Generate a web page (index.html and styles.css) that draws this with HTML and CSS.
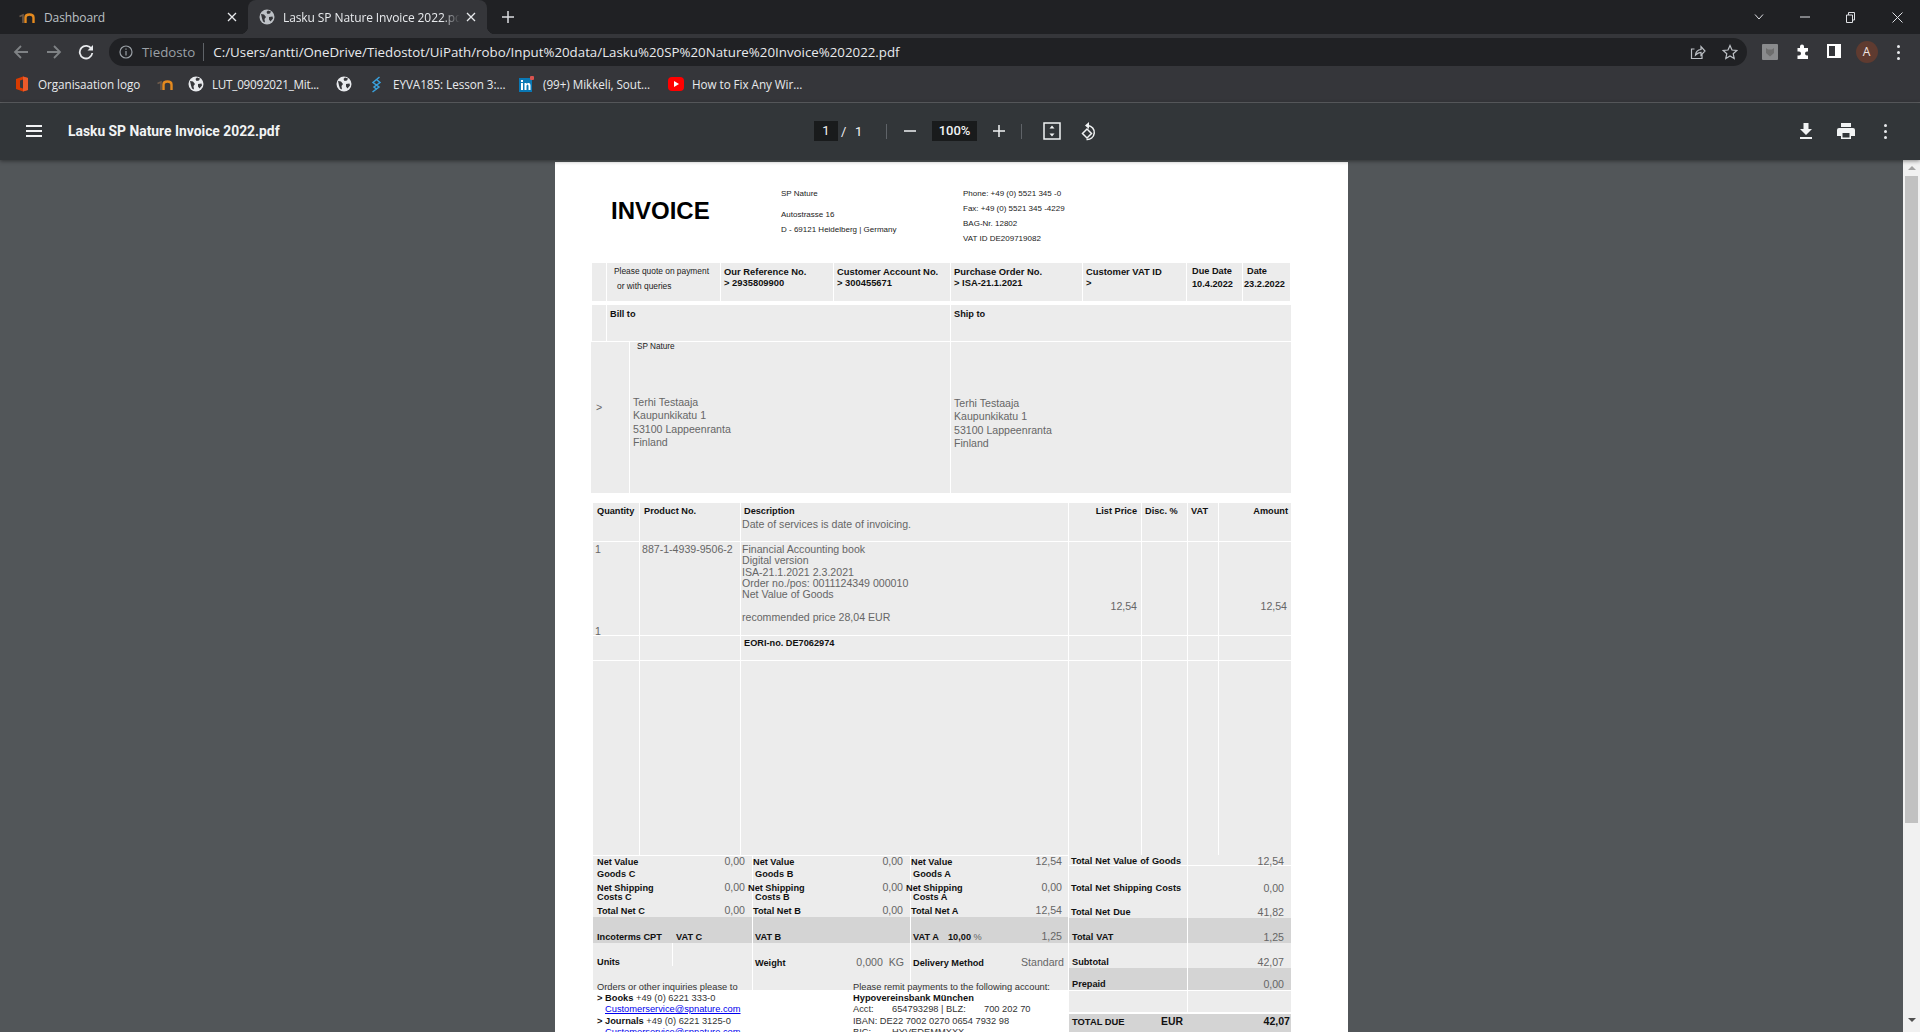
FILE: index.html
```html
<!DOCTYPE html>
<html lang="en">
<head>
    <meta charset="UTF-8">
    <title>Lasku SP Nature Invoice 2022.pdf</title>
    <link rel="stylesheet" href="styles.css">
</head>
<body>
    <svg class="defs" width="0" height="0">
        <symbol id="globe" viewBox="0 0 16 16">
            <circle cx="8" cy="8" r="7.5" fill="currentColor"/>
            <path d="M2 5l3 .5 2 2.500-1.500 2 .5 3.500-2-1-1-3zM9 1.500l3 1-1 2-2.500.5-1-2zM10 8l3.500-.5.500 2-2.500 3-1.500-2z" fill="#35363a"/>
        </symbol>
        <symbol id="moodle" viewBox="0 0 16 16">
            <path d="M0.500 7.500l3.500-1.500v8" fill="none" stroke="#6d5a4b" stroke-width="1.600"/>
            <path d="M6.500 14V8.500q0-3 4-3t4 3V14" fill="none" stroke="#e58a1f" stroke-width="2.400"/>
        </symbol>
    </svg>

    <div class="tabstrip">
        <div class="tab">
            <svg class="tab-icon" width="16" height="16"><use href="#moodle"/></svg>
            <span class="tab-title">Dashboard</span>
            <svg class="tab-close" width="10" height="10" viewBox="0 0 10 10"><path d="M1 1l8 8M9 1l-8 8"/></svg>
        </div>
        <div class="tab active">
            <svg class="tab-icon" width="16" height="16"><use href="#globe"/></svg>
            <span class="tab-title">Lasku SP Nature Invoice 2022.pdf</span>
            <svg class="tab-close" width="10" height="10" viewBox="0 0 10 10"><path d="M1 1l8 8M9 1l-8 8"/></svg>
        </div>
        <svg class="new-tab" width="12" height="12" viewBox="0 0 12 12"><path d="M6 0v12M0 6h12"/></svg>
        <div class="window-btns">
            <svg width="10" height="6" viewBox="0 0 10 6"><path d="M1 .5l4 4.500 4-4.500"/></svg>
            <svg width="10" height="2" viewBox="0 0 10 2"><path d="M0 1h10"/></svg>
            <svg width="11" height="11" viewBox="0 0 11 11"><path d="M1.500 3h6v7.500h-6zM3.500 3V.5h6v7.500h-2"/></svg>
            <svg width="11" height="11" viewBox="0 0 11 11"><path d="M.5.5l10 10M10.500.5l-10 10"/></svg>
        </div>
    </div>

    <div class="toolbar">
        <svg class="nav-icon dim" width="16" height="16" viewBox="0 0 16 16"><path d="M15 8H2M8 2L2 8l6 6"/></svg>
        <svg class="nav-icon dim" width="16" height="16" viewBox="0 0 16 16"><path d="M1 8h13M8 2l6 6-6 6"/></svg>
        <svg class="nav-icon" width="16" height="16" viewBox="0 0 16 16"><path d="M13.500 5A6.300 6.300 0 1 0 14.300 9"/><path class="solid" d="M15 1v5.500H9.500z"/></svg>
        <div class="omnibox">
            <svg class="info-icon" width="14" height="14" viewBox="0 0 14 14"><circle cx="7" cy="7" r="6"/><path d="M7 6v4.500M7 3.500v1.300"/></svg>
            <span class="scheme">Tiedosto</span>
            <span class="url">C:/Users/antti/OneDrive/Tiedostot/UiPath/robo/Input%20data/Lasku%20SP%20Nature%20Invoice%202022.pdf</span>
            <svg class="omni-icon" width="16" height="16" viewBox="0 0 16 16"><path d="M12 9.500V14.500H1.500V5h3M5.500 11q.5-5 5.500-5.500V2.500L15 7l-4 4.300V8.300q-3 0-5.500 2.700z"/></svg>
            <svg class="omni-icon" width="16" height="16" viewBox="0 0 16 16"><path d="M8 1.500l2 4.500 4.800.5-3.600 3.200 1 4.800L8 12l-4.200 2.500 1-4.800L1.200 6.500 6 6z"/></svg>
        </div>
        <div class="ext-square"><svg width="10" height="10" viewBox="0 0 10 10"><path d="M1 1l2 1.500h4L9 1v5L5 9.500 1 6z" fill="#6e6e6e"/></svg></div>
        <svg class="ext-icon" width="16" height="16" viewBox="0 0 16 16"><path d="M5 2.500a2 2 0 0 1 4 0V4h4v3.500h-1a2 2 0 0 0 0 4h1V15H2.500v-3.500H4a2 2 0 0 0 0-4H2.500V4H5z" fill="#fff"/></svg>
        <svg class="ext-icon" width="14" height="14" viewBox="0 0 14 14"><path d="M0 0h14v14H0zM2 2v10h6V2z" fill="#fff" fill-rule="evenodd"/></svg>
        <div class="avatar">A</div>
        <div class="dots top-dots"><i></i><i></i><i></i></div>
    </div>

    <div class="bookmarks">
        <div class="bookmark book-office">
            <svg width="14" height="16" viewBox="0 0 14 16"><path d="M1 3l7-2.500L13 2v12l-5 1.500L1 13z" fill="#d83b01"/><path d="M5 4.500L8 3.500v9l-3-1z" fill="#35363a"/><path d="M8 .5L13 2v12l-5 1.500z" fill="#ea5a2a"/></svg>
            <span>Organisaation logo</span>
        </div>
        <div class="bookmark book-moodle"><svg width="16" height="16"><use href="#moodle"/></svg></div>
        <div class="bookmark book-lut">
            <svg width="16" height="16"><use href="#globe"/></svg>
            <span>LUT_09092021_Mit...</span>
        </div>
        <div class="bookmark book-globe"><svg width="16" height="16"><use href="#globe"/></svg></div>
        <div class="bookmark book-eyva">
            <svg width="12" height="17" viewBox="0 0 12 17"><path d="M9.500 1L3 6.500 9 11l-6.500 5M6.500 3.500L10 6.500 4 11l3 2.500" fill="none" stroke="#3aa0dc" stroke-width="1.500"/></svg>
            <span>EYVA185: Lesson 3:...</span>
        </div>
        <div class="bookmark book-linkedin">
            <svg width="16" height="16" viewBox="0 0 16 16"><rect x="1" y="2" width="13" height="14" fill="#0a78b5"/><rect x="12" y="0" width="4" height="4" rx="1" fill="#d9534f"/><path d="M3 7h2v7H3zM3 4h2v2H3zM6.500 7h2v1q1-1.300 2.500-1 1.500.3 1.500 2.500V14h-2V10q0-1.500-1-1.500t-1 1.500v4h-2z" fill="#fff"/></svg>
            <span>(99+) Mikkeli, Sout...</span>
        </div>
        <div class="bookmark book-youtube">
            <svg width="16" height="16" viewBox="0 0 16 16"><rect width="16" height="14" y="1" rx="4" fill="#f00"/><path d="M6 5l5 3-5 3z" fill="#fff"/></svg>
            <span>How to Fix Any Wir...</span>
        </div>
    </div>

    <div class="pdf-bar">
        <div class="hamburger"><i></i><i></i><i></i></div>
        <span class="pdf-title">Lasku SP Nature Invoice 2022.pdf</span>
        <div class="page-box">1</div>
        <span class="page-sep">/</span>
        <span class="page-total">1</span>
        <span class="bar-sep first"></span>
        <svg class="bar-icon zoom-minus" width="12" height="2" viewBox="0 0 12 2"><path d="M0 1h12"/></svg>
        <div class="zoom-box">100%</div>
        <svg class="bar-icon zoom-plus" width="12" height="12" viewBox="0 0 12 12"><path d="M6 0v12M0 6h12"/></svg>
        <span class="bar-sep second"></span>
        <svg class="bar-icon fit" width="18" height="18" viewBox="0 0 18 18"><path d="M1 1h16v16H1z"/><path class="solid" d="M9 3.500l2.500 3h-5zM9 14.500l2.500-3h-5z"/></svg>
        <svg class="bar-icon rotate" width="18" height="20" viewBox="0 0 18 20"><path d="M9 4.500a7 7 0 1 1-1.500 14"/><path d="M8 8l4.500 4.500L8 17l-4.500-4.500z"/><path class="solid" d="M10 1v7L6 4.500z"/></svg>
        <svg class="bar-icon download" width="14" height="16" viewBox="0 0 14 16"><path class="solid" d="M4.500 0h5v6H13L7 12 1 6h3.500zM1 14h12v2H1z"/></svg>
        <svg class="bar-icon print" width="18" height="18" viewBox="0 0 18 18"><path class="solid" fill-rule="evenodd" d="M4 1h10v4H4zM2 6h14q2 0 2 2v6h-4v3H4v-3H0V8q0-2 2-2zM5.500 11v4.500h7V11z"/></svg>
        <div class="dots bar-dots"><i></i><i></i><i></i></div>
    </div>

    <div class="pdf-area">
        <div class="viewer">
            <div class="page">
                <div class="inv-head">
                    <h1 class="inv-title">INVOICE</h1>
                    <div class="inv-addr">
                        <p class="addr-name">SP Nature</p>
                        <p>Autostrasse 16</p>
                        <p>D - 69121 Heidelberg | Germany</p>
                    </div>
                    <div class="inv-contact">
                        <p>Phone: +49 (0) 5521 345 -0</p>
                        <p>Fax: +49 (0) 5521 345 -4229</p>
                        <p>BAG-Nr. 12802</p>
                        <p>VAT ID DE209719082</p>
                    </div>
                </div>

                <div class="ref-row">
                    <div></div>
                    <div class="ref-quote"><p>Please quote on payment</p><p class="quote-2">or with queries</p></div>
                    <div class="ref-cell">Our Reference No.<br>&gt; 2935809900</div>
                    <div class="ref-cell">Customer Account No.<br>&gt; 300455671</div>
                    <div class="ref-cell">Purchase Order No.<br>&gt; ISA-21.1.2021</div>
                    <div class="ref-cell">Customer VAT ID<br>&gt;</div>
                    <div class="ref-date due">Due Date<br>10.4.2022</div>
                    <div class="ref-date">Date<br><span class="date-val">23.2.2022</span></div>
                </div>

                <div class="bill-row">
                    <div></div>
                    <div class="bill-label">Bill to</div>
                    <div class="bill-label">Ship to</div>
                </div>

                <div class="addr-row">
                    <div class="addr-mark">&gt;</div>
                    <div class="addr-cell">
                        <p class="addr-top">SP Nature</p>
                        <p class="addr-lines">Terhi Testaaja<br>Kaupunkikatu 1<br>53100 Lappeenranta<br>Finland</p>
                    </div>
                    <div class="addr-cell ship">
                        <p class="addr-lines">Terhi Testaaja<br>Kaupunkikatu 1<br>53100 Lappeenranta<br>Finland</p>
                    </div>
                </div>

                <div class="items">
                    <div class="item-row head">
                        <div>Quantity</div>
                        <div>Product No.</div>
                        <div>Description</div>
                        <div class="right">List Price</div>
                        <div>Disc. %</div>
                        <div>VAT</div>
                        <div class="right amount">Amount</div>
                    </div>
                    <div class="item-row note">
                        <div></div><div></div>
                        <div class="grey">Date of services is date of invoicing.</div>
                        <div></div><div></div><div></div><div></div>
                    </div>
                    <div class="item-row line">
                        <div class="qty grey"><span>1</span><span class="qty-end">1</span></div>
                        <div class="grey product">887-1-4939-9506-2</div>
                        <div class="grey">Financial Accounting book<br>Digital version<br>ISA-21.1.2021 2.3.2021<br>Order no./pos: 0011124349 000010<br>Net Value of Goods<br><br>recommended price 28,04 EUR</div>
                        <div class="grey money">12,54</div>
                        <div></div><div></div>
                        <div class="grey money">12,54</div>
                    </div>
                    <div class="item-row eori">
                        <div></div><div></div>
                        <div>EORI-no. DE7062974</div>
                        <div></div><div></div><div></div><div></div>
                    </div>
                    <div class="item-row blank">
                        <div></div><div></div><div></div><div></div><div></div><div></div><div></div>
                    </div>
                </div>

                <div class="summary">
                    <div class="sum-left">
                        <div class="sum-row h9 first-line">
                            <div class="sum-cell"><div class="sum-line"><b>Net Value</b><span>0,00</span></div></div>
                            <div class="sum-cell col-b"><div class="sum-line"><b class="pull-1">Net Value</b><span>0,00</span></div></div>
                            <div class="sum-cell col-a"><div class="sum-line"><b class="pull-1">Net Value</b><span>12,54</span></div></div>
                        </div>
                        <div class="sum-row h24 tight">
                            <div class="sum-cell"><div class="sum-line"><b>Goods C</b></div><div class="sum-line"><b>Net Shipping</b><span>0,00</span></div></div>
                            <div class="sum-cell col-b"><div class="sum-line"><b>Goods B</b></div><div class="sum-line"><b class="pull-2">Net Shipping</b><span>0,00</span></div></div>
                            <div class="sum-cell col-a"><div class="sum-line"><b>Goods A</b></div><div class="sum-line"><b class="pull-2">Net Shipping</b><span>0,00</span></div></div>
                        </div>
                        <div class="sum-row h24 wide">
                            <div class="sum-cell"><div class="sum-line"><b>Costs C</b></div><div class="sum-line"><b>Total Net C</b><span>0,00</span></div></div>
                            <div class="sum-cell col-b"><div class="sum-line"><b>Costs B</b></div><div class="sum-line"><b class="pull-1">Total Net B</b><span>0,00</span></div></div>
                            <div class="sum-cell col-a"><div class="sum-line"><b>Costs A</b></div><div class="sum-line"><b class="pull-1">Total Net A</b><span>12,54</span></div></div>
                        </div>
                        <div class="sum-row dark h23 low15">
                            <div class="sum-cell"><div class="sum-line start"><b class="inco">Incoterms CPT</b><b>VAT C</b></div></div>
                            <div class="sum-cell col-b"><div class="sum-line"><b>VAT B</b></div></div>
                            <div class="sum-cell col-a"><div class="sum-line vat-line"><b class="vat-a">VAT A</b><b class="vat-rate">10,00 <em>%</em></b><span>1,25</span></div></div>
                        </div>
                        <div class="sum-row h25 low16">
                            <div class="units-cell">
                                <div class="sum-cell"><div class="sum-line"><b>Units</b></div></div>
                                <div></div>
                            </div>
                            <div class="sum-cell col-b"><div class="sum-line"><b>Weight</b><span class="weight">0,000 &nbsp;KG</span></div></div>
                            <div class="sum-cell col-a"><div class="sum-line wider"><b>Delivery Method</b><span>Standard</span></div></div>
                        </div>
                        <div class="sum-row h24">
                            <div></div><div></div><div></div>
                        </div>

                        <div class="notes">
                            <div class="notes-left">
                                <p>Orders or other inquiries please to</p>
                                <p><b>&gt; Books</b> +49 (0) 6221 333-0</p>
                                <p class="mail"><a href="#">Customerservice@spnature.com</a></p>
                                <p><b>&gt; Journals</b> +49 (0) 6221 3125-0</p>
                                <p class="mail"><a href="#">Customerservice@spnature.com</a></p>
                            </div>
                            <div class="notes-right">
                                <p>Please remit payments to the following account:</p>
                                <p><b>Hypovereinsbank München</b></p>
                                <p class="bank"><span class="bank-key">Acct:</span><span class="bank-acct">654793298 | BLZ:</span><span>700 202 70</span></p>
                                <p>IBAN: DE22 7002 0270 0654 7932 98</p>
                                <p class="bank"><span class="bank-key">BIC:</span><span>HYVEDEMMXXX</span></p>
                            </div>
                        </div>
                    </div>

                    <div class="sum-right">
                        <div class="total-row h9 first-line"><div class="total-label"><b>Total Net Value of Goods</b></div><div class="total-val">12,54</div></div>
                        <div class="total-row h24 drop16"><div class="total-label"><b>Total Net Shipping Costs</b></div><div class="total-val">0,00</div></div>
                        <div class="total-row h24 drop15"><div class="total-label"><b>Total Net Due</b></div><div class="total-val">41,82</div></div>
                        <div class="total-row dark h23 drop15"><div class="total-label in"><b>Total VAT</b></div><div class="total-val">1,25</div></div>
                        <div class="total-row h25 drop16"><div class="total-label in"><b>Subtotal</b></div><div class="total-val">42,07</div></div>
                        <div class="total-row dark h22 drop12"><div class="total-label in"><b>Prepaid</b></div><div class="total-val">0,00</div></div>
                        <div class="total-row h21 sp2"><div></div><div></div></div>
                        <div class="total-due">
                            <b class="due-label">TOTAL DUE</b>
                            <b class="due-cur">EUR</b>
                            <b class="due-sum">42,07</b>
                        </div>
                    </div>
                </div>
            </div>
        </div>
        <div class="scrollbar">
            <div class="arrow up"></div>
            <div class="thumb"></div>
            <div class="arrow down"></div>
        </div>
    </div>
</body>
</html>
```

FILE: styles.css
```css
* {
    box-sizing: border-box;
}

html, body {
    margin: 0;
    height: 1032px;
    overflow: hidden;
}

body {
    display: flex;
    flex-direction: column;
    font-family: "Open Sans", sans-serif;
    background-color: #525659;
    color: #e8eaed;
}

p, h1 {
    margin: 0;
}

.defs {
    position: absolute;
}

/* tabs */
.tabstrip {
    height: 34px;
    flex: none;
    display: flex;
    align-items: center;
    background-color: #202124;
}

.tab {
    width: 248px;
    height: 34px;
    display: flex;
    align-items: center;
    padding: 0 11px 0 19px;
    font-size: 12px;
    color: #bdc1c6;
}

.tab.active {
    width: 239px;
    position: relative;
    padding: 0 11px 0 11px;
    background-color: #35363a;
    border-radius: 8px 8px 0 0;
    color: #e8eaed;
}

.tab.active::before, .tab.active::after {
    content: "";
    position: absolute;
    bottom: 0;
    width: 8px;
    height: 8px;
    background: radial-gradient(circle at 0 0, transparent 8px, #35363a 8.5px);
}

.tab.active::before {
    left: -8px;
}

.tab.active::after {
    right: -8px;
    background: radial-gradient(circle at 100% 0, transparent 8px, #35363a 8.5px);
}

.tab-icon {
    flex: none;
    color: #bdc1c6;
}

.tab-title {
    flex: 1;
    margin-left: 9px;
    white-space: nowrap;
    overflow: hidden;
    letter-spacing: -0.1px;
}

.tab.active .tab-title {
    margin-left: 8px;
    -webkit-mask-image: linear-gradient(to right, #000 90%, transparent);
    mask-image: linear-gradient(to right, #000 90%, transparent);
}

.tab-close {
    flex: none;
    margin-left: 6px;
    fill: none;
    stroke: #e8eaed;
    stroke-width: 1.3;
}

.new-tab {
    margin-left: 15px;
    fill: none;
    stroke: #dadce0;
    stroke-width: 1.5;
}

.window-btns {
    margin-left: auto;
    width: 166px;
    padding-right: 17px;
    display: flex;
    align-items: center;
    justify-content: space-between;
}

.window-btns svg {
    fill: none;
    stroke: #dfe1e5;
    stroke-width: 1;
}

/* toolbar */
.toolbar {
    height: 69px;
    flex: none;
    display: flex;
    align-items: flex-start;
    padding: 4px 0 0 13px;
    background-color: #35363a;
    border-bottom: 1px solid #5f6164;
}

.nav-icon {
    margin: 6px 16.5px 0 0;
    fill: none;
    stroke: #e8eaed;
    stroke-width: 1.8;
}

.nav-icon.dim {
    stroke: #7f8285;
}

.nav-icon .solid {
    fill: #e8eaed;
    stroke: none;
}

.omnibox {
    width: 1638px;
    height: 28px;
    margin-left: -1.5px;
    display: flex;
    align-items: center;
    padding: 0 9px 0 10px;
    background-color: #202124;
    border-radius: 14px;
    font-size: 13.3px;
}

.info-icon {
    flex: none;
    fill: none;
    stroke: #9aa0a6;
    stroke-width: 1.2;
}

.scheme {
    margin-left: 9px;
    padding-right: 8px;
    border-right: 1px solid #5f6368;
    color: #9aa0a6;
    line-height: 18px;
}

.url {
    flex: 1;
    margin-left: 9px;
    white-space: nowrap;
    color: #e8eaed;
}

.omni-icon {
    flex: none;
    margin-left: 16px;
    fill: none;
    stroke: #bdc1c6;
    stroke-width: 1.2;
}

.ext-square {
    width: 16px;
    height: 16px;
    margin: 6px 0 0 15px;
    display: flex;
    align-items: center;
    justify-content: center;
    background-color: #8a8b8d;
    border-radius: 1px;
}

.ext-icon {
    margin: 6px 0 0 16.5px;
}

.avatar {
    width: 22px;
    height: 22px;
    margin: 3px 0 0 14.5px;
    border-radius: 50%;
    background-color: #5f3b30;
    color: #f1e6e2;
    font-size: 12px;
    line-height: 22px;
    text-align: center;
}

.dots {
    width: 3px;
    display: flex;
    flex-direction: column;
    gap: 3px;
}

.dots i {
    display: block;
    width: 3px;
    height: 3px;
    border-radius: 50%;
    background-color: #e8eaed;
}

.top-dots {
    margin: 7px 0 0 19.5px;
}

/* bookmarks sit in the lower half of the toolbar, drawn over it */
.bookmarks {
    height: 24px;
    flex: none;
    margin-top: -31px;
    margin-bottom: 7px;
    display: flex;
    align-items: center;
    font-size: 11.7px;
    position: relative;
    color: #e8eaed;
}

.bookmark {
    display: flex;
    align-items: center;
    white-space: nowrap;
    letter-spacing: -0.05px;
}

.bookmark span {
    margin-left: 8px;
}

.book-office { margin-left: 15px; width: 142px; }
.book-office span { margin-left: 9px; }
.book-moodle { width: 31px; }
.book-lut { width: 148px; letter-spacing: -0.25px; }
.book-globe { width: 34px; }
.book-eyva { width: 148px; }
.book-eyva span { margin-left: 11px; }
.book-linkedin { width: 150px; }
.book-linkedin span { margin-left: 9px; }
.book-youtube { width: 140px; }

/* pdf viewer toolbar */
.pdf-bar {
    height: 57px;
    flex: none;
    display: flex;
    align-items: center;
    padding: 0 0 1px 26px;
    background-color: #323639;
    box-shadow: 0 1px 4px rgba(0, 0, 0, 0.45);
    position: relative;
    z-index: 2;
    font-family: Roboto, sans-serif;
    font-size: 13px;
    color: #f1f3f4;
}

.hamburger {
    width: 16px;
    display: flex;
    flex-direction: column;
    gap: 3px;
}

.hamburger i {
    display: block;
    height: 2px;
    background-color: #f1f3f4;
}

.pdf-title {
    width: 746px;
    margin-left: 26px;
    font-size: 13.85px;
    font-weight: 700;
}

.page-box {
    width: 24px;
    height: 20px;
    line-height: 20px;
    text-align: center;
    background-color: #191b1c;
}

.page-sep {
    margin-left: 3px;
    width: 10px;
}

.page-total {
    width: 7px;
    margin-left: 4px;
}

.bar-sep {
    width: 1px;
    height: 15px;
    background-color: #5f6368;
}

.bar-sep.first { margin-left: 24px; }
.bar-sep.second { margin-left: 16px; }

.bar-icon {
    fill: none;
    stroke: #f1f3f4;
    stroke-width: 1.5;
}

.bar-icon .solid {
    fill: #f1f3f4;
    stroke: none;
}

.zoom-minus { margin-left: 17px; }

.zoom-box {
    width: 45px;
    height: 20px;
    margin-left: 16px;
    line-height: 20px;
    text-align: center;
    background-color: #191b1c;
    font-weight: 500;
}

.zoom-plus { margin-left: 16px; }
.fit { margin-left: 21px; }
.rotate { margin-left: 18px; }
.download { margin-left: 702px; }
.print { margin-left: 24px; }
.bar-dots { margin-left: 29px; }

/* viewer */
.pdf-area {
    flex: 1;
    min-height: 0;
    display: flex;
}

.viewer {
    flex: 1;
    min-width: 0;
    overflow: hidden;
    display: flex;
    justify-content: center;
}

.scrollbar {
    width: 17px;
    flex: none;
    display: flex;
    flex-direction: column;
    align-items: center;
    background-color: #f1f1f1;
}

.arrow {
    width: 0;
    height: 0;
    border-left: 4px solid transparent;
    border-right: 4px solid transparent;
}

.arrow.up {
    margin-top: 6px;
    border-bottom: 4px solid #a3a3a3;
}

.arrow.down {
    margin-top: 195px;
    border-top: 4px solid #505050;
}

.thumb {
    width: 13px;
    height: 647px;
    margin-top: 6px;
    background-color: #c1c1c1;
}

/* the invoice page */
.page {
    width: 793px;
    height: 1122px;
    flex: none;
    margin-top: 2px;
    padding-left: 36px;
    background-color: #fff;
    font-family: "Liberation Sans", Arial, sans-serif;
    color: #222;
    font-size: 8.4px;
}

.inv-head {
    height: 101px;
    padding-top: 24px;
    display: flex;
    font-size: 8px;
    line-height: 15px;
}

.inv-title {
    width: 170px;
    margin: 11px 0 0 20px;
    font-size: 24px;
    line-height: 28px;
    color: #000;
}

.inv-addr {
    width: 182px;
}

.addr-name {
    margin-bottom: 6px;
}

.ref-row {
    height: 38px;
    margin-left: 1px;
    display: grid;
    grid-template-columns: 14px 113px 112px 116px 131px 103px 55px 47px;
    gap: 1px;
}

.ref-row > div,
.bill-row > div,
.addr-row > div,
.item-row > div,
.sum-row > div,
.units-cell > div,
.total-row > div,
.total-due {
    background-color: #ececec;
}

.ref-quote {
    padding: 1px 0 0 7px;
    line-height: 15px;
}

.quote-2 {
    margin-left: 3px;
}

.ref-cell {
    padding: 3px 0 0 3px;
    font-size: 9.4px;
    font-weight: 700;
    line-height: 11px;
    color: #111;
}

.ref-date {
    padding: 2px 0 0 4px;
    font-size: 9.2px;
    font-weight: 700;
    line-height: 13px;
    color: #111;
}

.ref-date.due {
    padding-left: 5px;
}

.date-val {
    margin-left: -3px;
}

.bill-row {
    height: 36px;
    margin: 4px 0 1px 1px;
    display: grid;
    grid-template-columns: 14px 343px 340px;
    gap: 1px;
}

.bill-label {
    padding: 4px 0 0 3px;
    font-size: 9.2px;
    font-weight: 700;
    line-height: 11px;
    color: #111;
}

.addr-row {
    height: 151px;
    display: grid;
    grid-template-columns: 38px 320px 340px;
    gap: 1px;
}

.addr-mark {
    padding: 59px 0 0 5px;
    font-size: 10.6px;
    line-height: 12px;
    color: #666;
}

.addr-cell {
    padding-left: 3px;
}

.addr-cell.ship {
    padding-top: 55px;
}

.addr-top {
    margin: 0 0 44px 4px;
    font-size: 8.2px;
    line-height: 10px;
}

.addr-lines {
    font-size: 10.6px;
    line-height: 13.3px;
    color: #666;
}

/* line items */
.items {
    margin: 10px 0 1px 2px;
    display: flex;
    flex-direction: column;
    gap: 1px;
}

.item-row {
    display: grid;
    grid-template-columns: 46px 100px 327px 72px 45px 30px 72px;
    gap: 1px;
}

.item-row.head {
    height: 13px;
    font-size: 9.2px;
    font-weight: 700;
    line-height: 13px;
    color: #111;
}

.item-row.head > div {
    padding: 2px 3px 0 4px;
    white-space: nowrap;
}

.item-row.head > div:nth-child(n+3):not(.right) {
    padding-left: 3px;
}

.item-row.head .right {
    padding-right: 4px;
    text-align: right;
}

.item-row.head .right.amount {
    padding-right: 3px;
}

.item-row.note {
    height: 24px;
}

.grey {
    font-size: 10.6px;
    color: #666;
    line-height: 11.3px;
}

.item-row.note .grey {
    padding: 2px 0 0 1px;
}

.item-row.line {
    height: 93px;
}

.item-row.line .grey {
    padding: 2px 0 0 1px;
    white-space: nowrap;
}

.item-row.line .product {
    padding-left: 2px;
}

.item-row.line .qty {
    display: flex;
    flex-direction: column;
    justify-content: space-between;
    padding-left: 2px;
}

.qty-end {
    margin-bottom: -2px;
}

.item-row.line .money {
    padding: 59px 4px 0 0;
    text-align: right;
}

.item-row.eori {
    height: 24px;
    font-size: 9.2px;
    font-weight: 700;
    line-height: 11px;
    color: #111;
}

.item-row.eori > div {
    padding: 2px 0 0 3px;
}

.item-row.blank {
    height: 194px;
}

/* totals */
.summary {
    margin-left: 2px;
    display: flex;
    gap: 1px;
}

.sum-left {
    width: 475px;
    display: flex;
    flex-direction: column;
    gap: 1px;
}

.sum-right {
    width: 222px;
    display: flex;
    flex-direction: column;
    gap: 1px;
}

/* labels hang over the row below, so earlier rows stack on top */
.sum-left > :nth-child(1), .sum-right > :nth-child(1) { z-index: 7; }
.sum-left > :nth-child(2), .sum-right > :nth-child(2) { z-index: 6; }
.sum-left > :nth-child(3), .sum-right > :nth-child(3) { z-index: 5; }
.sum-left > :nth-child(4), .sum-right > :nth-child(4) { z-index: 4; }
.sum-left > :nth-child(5), .sum-right > :nth-child(5) { z-index: 3; }
.sum-left > :nth-child(6), .sum-right > :nth-child(6) { z-index: 2; }

.sum-row {
    display: grid;
    grid-template-columns: 159px 157px 157px;
    gap: 1px;
    line-height: 12px;
}

.h9 { height: 9px; }
.h21 { height: 21px; }
.h22 { height: 22px; }
.h23 { height: 23px; }
.h24 { height: 24px; }
.h25 { height: 25px; }

.sum-row > .sum-cell, .units-cell .sum-cell {
    padding: 0 7px 0 4px;
}

.sum-row > .col-b, .sum-row > .col-a {
    padding-left: 2px;
}

.sum-row > .col-a {
    padding-right: 6px;
}

.first-line .sum-line, .first-line.total-row > div {
    margin-top: -1px;
}

.first-line.total-row > div {
    height: 10px;
}

.tight { line-height: 13px; }
.tight .sum-cell { padding-top: 2px; }
.wide { line-height: 13px; }
.low15 .sum-cell { padding-top: 15px; }
.low16 .sum-cell { padding-top: 15.5px; }

.sum-line {
    display: flex;
    justify-content: space-between;
    align-items: baseline;
    height: 1lh;
    white-space: nowrap;
}

.sum-line.start {
    justify-content: flex-start;
}

.sum-line.vat-line {
    margin-top: -1px;
}

.sum-line b, .total-label b {
    font-size: 9.2px;
    color: #111;
}

.total-label b {
    word-spacing: 0.5px;
}

.sum-line span, .total-val {
    font-size: 10.6px;
    color: #666;
}

.pull-1 { margin-left: -2px; }
.pull-2 { margin-left: -7px; }

.inco {
    width: 79px;
}

.sum-line .vat-a {
    width: 35px;
}

.sum-line .vat-rate {
    flex: 1;
}

.vat-rate em {
    font-style: normal;
    font-weight: 400;
    color: #666;
}

.sum-line .weight {
    margin-right: -1px;
    margin-left: auto;
}

.wider span {
    margin-right: -2px;
}

.sum-row > .units-cell {
    display: grid;
    grid-template-columns: 79px 79px;
    gap: 1px;
    background: none;
}

.sum-row.dark > div, .total-row.dark > div, .total-due {
    background-color: #d4d4d4;
}

.total-row {
    display: grid;
    grid-template-columns: 118px 103px;
    gap: 1px;
    line-height: 12px;
}

.total-label {
    padding-left: 2px;
    white-space: nowrap;
}

.total-label.in {
    padding-left: 3px;
}

.total-val {
    padding-right: 7px;
    text-align: right;
}

.drop12 > div { padding-top: 12px; }
.drop15 > div { padding-top: 15px; }
.drop16 > div { padding-top: 15.5px; }

.sp2 { margin-top: 2px; }

.total-due {
    height: 30px;
    margin-top: 1px;
    display: flex;
    align-items: baseline;
    padding: 1px 1px 0 3px;
    line-height: 12px;
    color: #111;
}

.due-label {
    width: 89px;
    font-size: 9.4px;
}

.due-cur {
    flex: 1;
    font-size: 10.4px;
}

.due-sum {
    font-size: 10.6px;
}

/* contact notes run over the last grey row */
.notes {
    margin-top: -9px;
    padding-left: 4px;
    display: flex;
    font-size: 9.3px;
    line-height: 11.2px;
    color: #333;
    white-space: nowrap;
    z-index: 8;
}

.notes b {
    color: #111;
}

.notes-left {
    width: 256px;
}

.mail {
    margin-left: 8px;
}

.mail a {
    color: #00e;
}

.bank {
    display: flex;
}

.bank-key {
    width: 39px;
}

.bank-acct {
    width: 92px;
}
```
